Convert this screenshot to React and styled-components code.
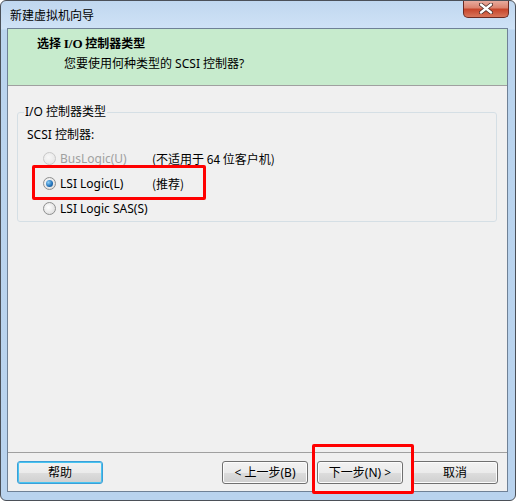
import React from "react"
import styled, { createGlobalStyle, css } from "styled-components"

const GlobalStyle = createGlobalStyle`
  body {
    margin: 0;
    background: #ffffff;
    font-family: "Noto Sans", "Noto Sans CJK SC", sans-serif;
    font-size: 12px;
    color: #000;
  }
`

const Window = styled.div`
  position: relative;
  width: 516px;
  height: 501px;
  box-sizing: border-box;
  border: 1px solid #4b5058;
  border-radius: 6px;
  background: linear-gradient(#c0d7ef 0px, #cfe2f6 28px, #bad4ee 29px, #b9d3ee 100%);
  display: flex;
  flex-direction: column;
  overflow: hidden;
`

const TitleBar = styled.div`
  height: 27px;
  display: flex;
  align-items: flex-start;
  padding-left: 9px;
`

const Title = styled.div`
  margin-top: 6px;
  line-height: 16px;
  font-family: "Noto Sans CJK SC", sans-serif;
`

const CloseButton = styled.div`
  margin-left: auto;
  margin-right: 6px;
  margin-top: -1px;
  width: 46px;
  height: 18px;
  box-sizing: border-box;
  border: 1px solid #6b2a22;
  border-top: none;
  border-radius: 0 0 5px 5px;
  background: linear-gradient(#eab0a4 0%, #dc8470 45%, #c7452b 55%, #d8755a 100%);
  display: flex;
  align-items: center;
  justify-content: center;
`

const Client = styled.div`
  flex: 1;
  margin: 0 7px 8px 6px;
  border: 1px solid #6f8196;
  background: #f0f0f0;
  display: flex;
  flex-direction: column;
`

const Header = styled.div`
  height: 50px;
  background: #c7ebcd;
  border-bottom: 1px solid #a0a0a0;
  padding: 6px 0 0 29px;
`

const HeaderTitle = styled.div`
  font-weight: bold;
  line-height: 16px;
  font-family: "Noto Sans CJK SC", sans-serif;
`

const SerifBold = styled.span`
  font-family: "Liberation Serif", serif;
  font-size: 13px;
`

const HeaderSub = styled.div`
  margin: 4px 0 0 27px;
  line-height: 16px;
`

const Body = styled.div`
  flex: 1;
  padding: 18px 9px 0 9px;
`

const Group = styled.fieldset`
  margin: 0;
  width: 480px;
  box-sizing: border-box;
  border: 1px solid #d5dfe5;
  border-radius: 3px;
  padding: 0;
`

const Legend = styled.legend`
  margin-left: 6px;
  padding: 0 1px;
  line-height: 16px;
`

const GroupLabel = styled.div`
  margin: 7px 0 3px 9px;
  line-height: 16px;
`

const Row = styled.div`
  height: 25px;
  display: flex;
  align-items: center;
  padding-left: 25px;
`

const Choice = styled.label`
  width: 109px;
  display: flex;
  align-items: center;
  gap: 4px;
  color: ${(p) => (p.$disabled ? "#a0a0a0" : "#000")};
`

const Radio = styled.span`
  width: 13px;
  height: 13px;
  box-sizing: border-box;
  border-radius: 50%;
  border: 1px solid ${(p) => (p.$disabled ? "#c8c8c8" : "#8e8f8f")};
  background: ${(p) =>
    p.$disabled
      ? "radial-gradient(circle at 40% 40%, #f7f7f7, #e2e2e2)"
      : "radial-gradient(circle at 40% 40%, #ffffff, #d6d6d6)"};
  display: flex;
  align-items: center;
  justify-content: center;
  ${(p) =>
    p.$checked &&
    css`
      &::after {
        content: "";
        width: 7px;
        height: 7px;
        border-radius: 50%;
        background: radial-gradient(circle at 35% 35%, #8ed0f8, #1e6fb8 60%, #14416f);
      }
    `}
`

const Note = styled.span`
  font-family: "Noto Sans CJK SC", sans-serif;
`

const Footer = styled.div`
  border-top: 1px solid #a0a0a0;
  height: 30px;
  display: flex;
  align-items: flex-start;
  padding: 8px 8px 0 9px;
  margin-top: auto;
`

const Button = styled.div`
  width: 86px;
  height: 23px;
  box-sizing: border-box;
  border: 1px solid ${(p) => (p.$focused ? "#3c9fd8" : "#707070")};
  border-radius: 3px;
  background: linear-gradient(#f2f2f2 0%, #ebebeb 50%, #dddddd 51%, #cfcfcf 100%);
  box-shadow: ${(p) =>
    p.$focused ? "inset 0 0 0 1px #48c4f0" : "inset 0 0 0 1px #fcfcfc"};
  display: flex;
  align-items: center;
  justify-content: center;
  font-size: 12px;
  line-height: 16px;
  margin-left: ${(p) => p.$gap || 0}px;
`

const RedBox = styled.div`
  position: absolute;
  box-sizing: border-box;
  border: 3px solid #ff0000;
  border-radius: 2px;
  pointer-events: none;
`

const App = () => (
  <>
    <GlobalStyle />
    <Window>
      <TitleBar>
        <Title>新建虚拟机向导</Title>
        <CloseButton>
          <svg width="14" height="11" viewBox="0 0 14 11">
            <path
              d="M2 1.5 L12 9.5 M12 1.5 L2 9.5"
              stroke="#4a2a26"
              strokeWidth="4"
              strokeLinecap="round"
            />
            <path
              d="M2 1.5 L12 9.5 M12 1.5 L2 9.5"
              stroke="#ffffff"
              strokeWidth="2.4"
              strokeLinecap="round"
            />
          </svg>
        </CloseButton>
      </TitleBar>
      <Client>
        <Header>
          <HeaderTitle>
            选择 <SerifBold>I/O</SerifBold> 控制器类型
          </HeaderTitle>
          <HeaderSub>您要使用何种类型的 SCSI 控制器?</HeaderSub>
        </Header>
        <Body>
          <Group>
            <Legend>I/O 控制器类型</Legend>
            <GroupLabel>SCSI 控制器:</GroupLabel>
            <Row>
              <Choice $disabled>
                <Radio $disabled />
                BusLogic(U)
              </Choice>
              <Note>(不适用于 64 位客户机)</Note>
            </Row>
            <Row>
              <Choice>
                <Radio $checked />
                LSI Logic(L)
              </Choice>
              <Note>(推荐)</Note>
            </Row>
            <Row>
              <Choice>
                <Radio />
                LSI Logic SAS(S)
              </Choice>
            </Row>
          </Group>
        </Body>
        <Footer>
          <Button $focused>帮助</Button>
          <Button $gap={119}>&lt; 上一步(B)</Button>
          <Button $gap={9}>下一步(N) &gt;</Button>
          <Button $gap={9}>取消</Button>
        </Footer>
      </Client>
      <RedBox style={{ left: 31, top: 164, width: 174, height: 35 }} />
      <RedBox style={{ left: 311, top: 443, width: 102, height: 50 }} />
    </Window>
  </>
)

export default App
